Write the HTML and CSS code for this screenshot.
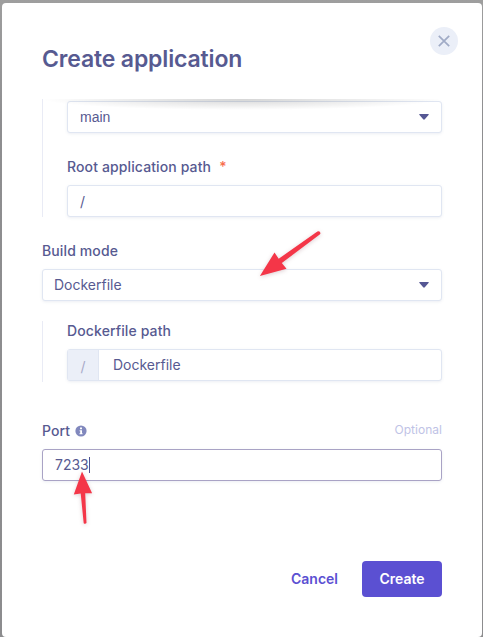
FILE: index.html
```html
<!DOCTYPE html>
<html lang="en">
<head>
<meta charset="utf-8">
<title>Create application</title>
<link rel="stylesheet" href="styles.css">
</head>
<body>
<main class="modal">
  <header class="modal-header">
    <h1>Create application</h1>
    <button class="close" aria-label="Close"><svg width="12" height="12" viewBox="0 0 12 12"><path d="M.8.8 11.2 11.2M11.2.8.8 11.2"/></svg></button>
  </header>
  <section class="form">
    <div class="scroll-shadow"></div>
    <div class="nested nested-repo">
      <div class="control native"><span>main</span><svg class="caret" width="10" height="6" viewBox="0 0 10 6"><path d="M.8 0h8.4q1.1.2.3 1.1L5.8 5.3q-.8.8-1.6 0L.5 1.1Q-.3.2.8 0Z"/></svg></div>
      <label class="label root-label"><span>Root application path</span><span class="required">*</span></label>
      <div class="control"><span class="slash">/</span></div>
    </div>
    <label class="label build-label"><span>Build mode</span></label>
    <div class="control build"><span>Dockerfile</span><svg class="caret" width="10" height="6" viewBox="0 0 10 6"><path d="M.8 0h8.4q1.1.2.3 1.1L5.8 5.3q-.8.8-1.6 0L.5 1.1Q-.3.2.8 0Z"/></svg></div>
    <div class="nested nested-docker">
      <label class="label"><span>Dockerfile path</span></label>
      <div class="control prefixed"><span class="prefix">/</span><span>Dockerfile</span></div>
    </div>
    <div class="label port-label"><span>Port</span><svg class="info" width="12" height="12" viewBox="0 0 12 12"><circle cx="6" cy="6" r="5.6"/><path d="M5 2.5h2v1.8H5zM4.6 5.2H7v3h.6v1.1H4.5V8.2h.7v-2h-.6z"/></svg><span class="optional">Optional</span></div>
    <div class="control focused"><span>7233</span><i class="cursor"></i></div>
  </section>
  <footer class="actions">
    <button class="cancel">Cancel</button>
    <button class="create">Create</button>
  </footer>
</main>
<svg class="annotations" width="483" height="637" viewBox="0 0 483 637">
  <path d="M317.4 231.5q2-.7 2.8.9.6 1.2-.5 2.2L281.8 263l4.7 5.8-26.6 7.3L274.5 252.5l4.2 6.3z"/>
  <path d="M82 471.5 92.1 493.3 85.2 493.2 86.5 523q-1.3 1.5-2.8.2L80.7 493.6 73.8 494.5z"/>
</svg>
</body>
</html>
```

FILE: styles.css
```css
* { box-sizing: border-box; }
body {
  margin: 0;
  height: 637px;
  padding: 3px 1px 0 2px;
  overflow: hidden;
  background: linear-gradient(#9e9e9e, #8e8e90 20%, #8c8c8e);
  font: 14px/20px Inter, "Liberation Sans", sans-serif;
  color: #575a91;
}
button { border: 0; font: inherit; padding: 0; }
.modal {
  height: 634px;
  padding: 0 40px;
  background: #fff;
  border-radius: 4px;
}
.modal-header {
  display: flex;
  justify-content: space-between;
  height: 96px;
  margin-right: -16px;
}
h1 {
  margin: 40px 0 0;
  font-size: 23px;
  line-height: 32px;
  font-weight: 600;
  letter-spacing: -.15px;
  white-space: nowrap;
}
.close {
  display: grid;
  place-items: center;
  width: 28px;
  height: 28px;
  margin-top: 24px;
  border-radius: 50%;
  background: #ebeff8;
}
.close path { fill: none; stroke: #a0abc6; stroke-width: 1.7; }
.form { position: relative; height: 447px; }
.scroll-shadow {
  position: absolute;
  z-index: 1;
  inset: 0 0 auto;
  height: 11px;
  background: radial-gradient(farthest-side at 50% 0, rgba(0, 0, 0, .16), rgba(0, 0, 0, 0));
}
.nested { padding-left: 24px; border-left: 1px solid #e9ebf5; }
.nested-repo { height: 118px; padding-top: 2px; }
.nested-docker { height: 61px; margin-top: 20px; }
.label {
  display: flex;
  align-items: center;
  height: 20px;
  margin-bottom: 8px;
  font-weight: 500;
  letter-spacing: .12px;
  white-space: nowrap;
}
.root-label { margin-top: 24px; }
.required { margin-left: 8px; color: #f76d4d; }
.build-label { margin-top: 24px; }
.port-label { margin-top: 39px; }
.info { margin-left: 5px; }
.info circle { fill: #8188bd; }
.info path { fill: #fff; }
.optional {
  margin-left: auto;
  font-size: 12px;
  font-weight: 400;
  letter-spacing: .02px;
  color: #c0c3e6;
  position: relative;
  top: -1px;
}
.control {
  display: flex;
  align-items: center;
  height: 32px;
  padding: 0 12px;
  border: 1px solid #e0e6f2;
  border-radius: 3px;
  background: #fff;
  box-shadow: 0 1px 3px rgba(67, 90, 140, .1);
  letter-spacing: 0;
}
.native { font-family: "Liberation Sans", sans-serif; }
.caret { margin-left: auto; fill: #555794; }
.build { padding-left: 11px; }
.prefixed { padding-left: 0; }
.slash { padding-top: 2px; }
.prefix {
  display: grid;
  place-items: center;
  width: 31px;
  height: 100%;
  padding-top: 4px;
  margin-right: 14px;
  border-right: 1px solid #e0e6f2;
  background: #ebeff8;
  color: #a8aac8;
}
.focused { border-color: #a9a3c5; }
.cursor { width: 1px; height: 16px; background: #4f5292; }
.actions { display: flex; justify-content: flex-end; padding-top: 15px; }
.actions button {
  height: 36px;
  font-weight: 600;
  letter-spacing: 0;
}
.cancel { margin-right: 24px; background: none; color: #5b50d2; }
.create { width: 80px; border-radius: 4px; background: #5b50d2; color: #fff; }
.annotations {
  position: absolute;
  inset: 0;
  fill: #f43648;
  pointer-events: none;
  filter: drop-shadow(0 1px 2px rgba(80, 0, 20, .2));
}
```
